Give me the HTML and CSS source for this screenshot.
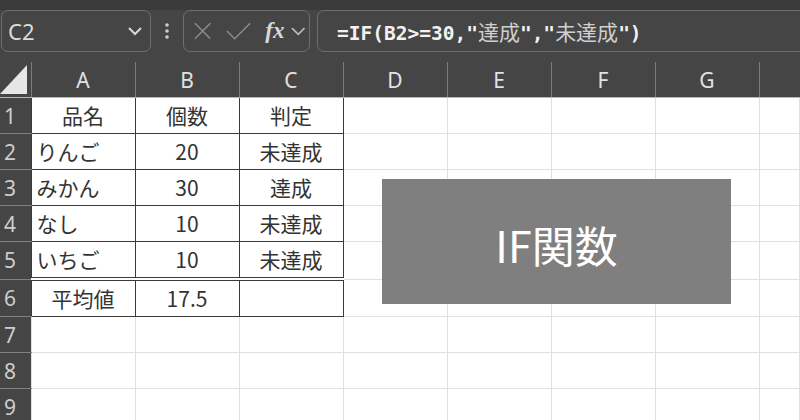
FILE: index.html
```html
<!DOCTYPE html>
<html lang="ja">
<head>
    <meta charset="UTF-8">
    <meta name="viewport" content="width=device-width, initial-scale=1.0">
    <title>IF関数</title>
    <link rel="stylesheet" href="styles.css">
</head>
<body>

    <div class="topbar"></div>

    <!-- 数式バー -->
    <div class="formula-bar">
        <div class="name-box">
            <span>C2</span>
            <svg class="chevron" width="16" height="10" viewBox="0 0 16 10"><path d="M2 2 L8 8 L14 2" fill="none" stroke="#d8d8d8" stroke-width="2"/></svg>
        </div>
        <div class="dots">
            <svg width="6" height="18" viewBox="0 0 6 18"><circle cx="3" cy="3" r="1.8" fill="#cfcfcf"/><circle cx="3" cy="9" r="1.8" fill="#cfcfcf"/><circle cx="3" cy="15" r="1.8" fill="#cfcfcf"/></svg>
        </div>
        <div class="func-box">
            <svg width="20" height="20" viewBox="0 0 20 20"><path d="M2 2 L18 18 M18 2 L2 18" stroke="#8a8a8a" stroke-width="1.6"/></svg>
            <svg width="26" height="20" viewBox="0 0 26 20"><path d="M1 10 L9 18 L25 2" fill="none" stroke="#8a8a8a" stroke-width="1.6"/></svg>
            <span class="fx">fx</span>
            <svg width="15" height="9" viewBox="0 0 15 9"><path d="M1 1 L7.5 7.5 L14 1" fill="none" stroke="#bdbdbd" stroke-width="1.6"/></svg>
        </div>
        <div class="formula-input">
            <span class="code">=IF(B2&gt;=30,"<span class="jp">達成</span>","<span class="jp">未達成</span>")</span>
        </div>
    </div>

    <!-- シート -->
    <div class="sheet">
        <table class="grid">
            <colgroup>
                <col class="c-head">
                <col class="c-col"><col class="c-col"><col class="c-col"><col class="c-col">
                <col class="c-col"><col class="c-col"><col class="c-col">
                <col>
            </colgroup>
            <tr class="col-heads">
                <th class="corner"><div class="triangle"></div></th>
                <th>A</th><th>B</th><th>C</th><th>D</th><th>E</th><th>F</th><th>G</th><th></th>
            </tr>
            <tr>
                <th class="row-num">1</th>
                <td class="t center">品名</td><td class="t center">個数</td><td class="t center">判定</td>
                <td></td><td></td><td></td><td></td><td></td>
            </tr>
            <tr>
                <th class="row-num">2</th>
                <td class="t">りんご</td><td class="t center">20</td><td class="t center">未達成</td>
                <td></td><td></td><td></td><td></td><td></td>
            </tr>
            <tr>
                <th class="row-num">3</th>
                <td class="t">みかん</td><td class="t center">30</td><td class="t center">達成</td>
                <td></td><td></td><td></td><td></td><td></td>
            </tr>
            <tr>
                <th class="row-num">4</th>
                <td class="t">なし</td><td class="t center">10</td><td class="t center">未達成</td>
                <td></td><td></td><td></td><td></td><td></td>
            </tr>
            <tr>
                <th class="row-num">5</th>
                <td class="t last">いちご</td><td class="t center last">10</td><td class="t center last">未達成</td>
                <td></td><td></td><td></td><td></td><td></td>
            </tr>
            <tr>
                <th class="row-num">6</th>
                <td class="t center">平均値</td><td class="t center">17.5</td><td class="t"></td>
                <td></td><td></td><td></td><td></td><td></td>
            </tr>
            <tr>
                <th class="row-num">7</th>
                <td></td><td></td><td></td><td></td><td></td><td></td><td></td><td></td>
            </tr>
            <tr>
                <th class="row-num">8</th>
                <td></td><td></td><td></td><td></td><td></td><td></td><td></td><td></td>
            </tr>
            <tr>
                <th class="row-num">9</th>
                <td></td><td></td><td></td><td></td><td></td><td></td><td></td><td></td>
            </tr>
        </table>

        <!-- タイトル（図形） -->
        <div class="title-box">IF関数</div>
    </div>

</body>
</html>
```

FILE: styles.css
```css
body {
    margin: 0;
    background-color: #454545;
    font-family: "Noto Sans", "Noto Sans CJK JP", sans-serif;
    overflow: hidden;
    width: 800px;
    height: 420px;
}
.topbar {
    height: 10px;
    background-color: #3b3b3b;
}
.formula-bar {
    display: flex;
    height: 42px;
    padding-left: 1px;
}
.name-box, .func-box, .formula-input {
    box-sizing: border-box;
    border: 1px solid #6e6e6e;
    border-radius: 7px;
    display: flex;
    align-items: center;
}
.name-box {
    width: 150px;
    padding: 0 7px 0 6px;
    justify-content: space-between;
    color: #dcdcdc;
    font-size: 22px;
}
.dots {
    width: 32px;
    display: flex;
    align-items: center;
    justify-content: center;
}
.func-box {
    width: 127px;
    padding: 0 4px 0 9px;
    gap: 12px;
}
.func-box svg:nth-child(2) {
    margin-left: 2px;
}
.fx {
    font-family: "Liberation Serif", serif;
    font-style: italic;
    font-weight: bold;
    font-size: 23px;
    color: #d8d8d8;
    margin-left: 2px;
    margin-right: -6px;
}
.formula-input {
    flex: 1;
    margin-left: 7px;
    margin-right: -12px;
    padding-left: 19px;
}
.code {
    font-family: "DejaVu Sans Mono", "Noto Sans CJK JP", monospace;
    font-weight: bold;
    font-size: 19.5px;
    color: #f2f2f2;
    white-space: pre;
}
.code .jp {
    font-family: "Noto Sans CJK JP", sans-serif;
    font-weight: normal;
    font-size: 21px;
    color: #cfcfcf;
}

/* シート */
.sheet {
    position: relative;
    margin-top: 10px;
}
.grid {
    border-collapse: collapse;
    table-layout: fixed;
    width: 800px;
}
.c-head {
    width: 31px;
}
.c-col {
    width: 104px;
}
.col-heads th {
    height: 35px;
    padding: 0;
    font-weight: normal;
    font-size: 21px;
    color: #e2e2e2;
    background-color: #454545;
    border-left: 1px solid #7d7d7d;
    border-bottom: 1px solid #b8b8b8;
}
.col-heads th.corner {
    border-left: none;
    position: relative;
}
.triangle {
    position: absolute;
    left: 0;
    bottom: 3px;
    width: 27px;
    height: 29px;
    background-color: #e6e6e6;
    clip-path: polygon(100% 0, 100% 100%, 0 100%);
}
.grid td {
    height: 35px;
    padding: 0;
    background-color: #fff;
    border: 1px solid #e0e0e0;
}
.row-num {
    height: 35px;
    padding: 0 0 0 4px;
    text-align: left;
    font-weight: normal;
    font-size: 21px;
    color: #cdcdcd;
    background-color: #454545;
    border-bottom: 1px solid #808080;
}
.grid td.t {
    border: 1px solid #3a3a3a;
    font-family: "Noto Sans CJK JP", sans-serif;
    font-size: 21px;
    color: #333;
    padding-left: 5px;
    line-height: 1;
}
.grid td.center {
    text-align: center;
    padding-left: 0;
}
.grid td.last {
    border-bottom: 4px double #3a3a3a;
}
.col-heads + tr td.t {
    border-top: none;
}
.title-box {
    position: absolute;
    left: 382px;
    top: 117px;
    width: 349px;
    height: 125px;
    background-color: rgba(117, 117, 117, 0.93);
    display: flex;
    align-items: center;
    justify-content: center;
    padding-top: 5px;
    box-sizing: border-box;
    color: #fff;
    font-family: "Noto Sans CJK JP", sans-serif;
    font-size: 43px;
}
```
